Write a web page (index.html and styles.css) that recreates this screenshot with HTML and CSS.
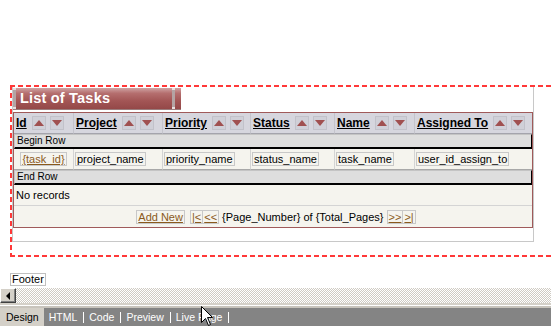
FILE: index.html
```html
<!DOCTYPE html>
<html lang="en">
<head>
    <meta charset="UTF-8">
    <meta name="viewport" content="width=device-width, initial-scale=1.0">
    <title>List of Tasks - Design</title>
    <link rel="stylesheet" href="styles.css">
</head>
<body>

<div class="design-view">
    <div class="drop-zone">
        <div class="panel">
            <div class="panel-title">
                <span class="title-cap"></span>
                <span class="title-text">List of Tasks</span>
                <span class="title-cap"></span>
                <span class="title-end"></span>
            </div>

            <table class="grid">
                <colgroup>
                    <col class="col-id">
                    <col class="col-project">
                    <col class="col-priority">
                    <col class="col-status">
                    <col class="col-name">
                    <col class="col-assigned">
                </colgroup>
                <thead>
                    <tr>
                        <th><div class="head"><a>Id</a><span class="sort up"></span><span class="sort down"></span></div></th>
                        <th><div class="head"><a>Project</a><span class="sort up"></span><span class="sort down"></span></div></th>
                        <th><div class="head"><a>Priority</a><span class="sort up"></span><span class="sort down"></span></div></th>
                        <th><div class="head"><a>Status</a><span class="sort up"></span><span class="sort down"></span></div></th>
                        <th><div class="head"><a>Name</a><span class="sort up"></span><span class="sort down"></span></div></th>
                        <th class="last"><div class="head"><a>Assigned To</a><span class="sort up"></span><span class="sort down"></span></div></th>
                    </tr>
                </thead>
                <tbody>
                    <tr>
                        <td colspan="6" class="marker-cell"><div class="marker">Begin Row</div></td>
                    </tr>
                    <tr class="data-row">
                        <td><div class="cell center"><span class="field link">{task_id}</span></div></td>
                        <td><div class="cell"><span class="field">project_name</span></div></td>
                        <td><div class="cell"><span class="field">priority_name</span></div></td>
                        <td><div class="cell"><span class="field">status_name</span></div></td>
                        <td><div class="cell"><span class="field">task_name</span></div></td>
                        <td class="last"><div class="cell"><span class="field">user_id_assign_to</span></div></td>
                    </tr>
                    <tr>
                        <td colspan="6" class="marker-cell"><div class="marker">End Row</div></td>
                    </tr>
                    <tr>
                        <td colspan="6" class="empty-cell"><div class="empty">No records</div></td>
                    </tr>
                    <tr>
                        <td colspan="6" class="nav-cell">
                            <div class="nav">
                                <span class="field link add-new">Add New</span>
                                <span class="field link">|&lt;</span><span class="field link joined">&lt;&lt;</span>
                                <span class="pages">{Page_Number} of {Total_Pages}</span>
                                <span class="field link">&gt;&gt;</span><span class="field link joined">&gt;|</span>
                            </div>
                        </td>
                    </tr>
                </tbody>
            </table>
        </div>
    </div>

    <div class="footer-zone"><span class="footer-box">Footer</span></div>

    <div class="hscroll"><span class="scroll-btn"></span></div>
    <div class="scroll-edge"></div>

    <div class="view-tabs">
        <span class="view-tab active">Design</span>
        <span class="view-tab">HTML</span>
        <span class="view-tab">Code</span>
        <span class="view-tab">Preview</span>
        <span class="view-tab">Live Page</span>
    </div>

    <svg class="cursor" width="13" height="21" viewBox="0 0 13 21">
        <path d="M0.5 0.5 L0.5 16.5 L4.5 12.5 L7.5 19.5 L9.5 18.5 L6.5 11.5 L11.5 11.5 Z" fill="#fff" stroke="#000" stroke-width="1"/>
    </svg>
</div>

</body>
</html>
```

FILE: styles.css
```css
body {
    margin: 0;
    background-color: #fff;
    overflow: hidden;
    font-family: "Liberation Sans", Arial, sans-serif;
    font-size: 11px;
    color: #000;
}

.design-view {
    position: relative;
    height: 326px;
    padding-top: 85px;
    box-sizing: border-box;
}

/* red dashed outline of the form area */
.drop-zone {
    margin: 0 -20px 0 10px;
    padding: 2px 0 15px 2px;
    background:
        repeating-linear-gradient(90deg, #ff3838 0 5px, transparent 5px 8px) top left / 100% 2px no-repeat,
        repeating-linear-gradient(90deg, #ff3838 0 5px, transparent 5px 8px) bottom left / 100% 2px no-repeat,
        repeating-linear-gradient(180deg, #ff3838 0 5px, transparent 5px 8px) top left / 2px 100% no-repeat;
}

.panel {
    width: 522px;
    box-sizing: border-box;
    border: 1px solid #c8c8c8;
    border-top: 0;
    padding: 1px 0 13px;
}

.panel-title {
    display: flex;
    width: 168px;
    height: 21px;
    border-bottom: 1px solid #9a7c7c;
    margin-bottom: 2px;
    background: linear-gradient(#cfa3a3 0, #b56f6f 25%, #a35656 60%, #944848 100%);
}

.title-cap {
    width: 3px;
    background: linear-gradient(#e8e0e0 0 2px, #b4a4a4 2px calc(100% - 2px), #e8e0e0 calc(100% - 2px));
}

.title-text {
    flex: 1;
    padding-left: 4px;
    color: #fff;
    font-weight: bold;
    font-size: 14.5px;
    line-height: 21px;
    letter-spacing: 0.2px;
}

.title-end {
    width: 6px;
}

.grid {
    width: 520px;
    table-layout: fixed;
    border-collapse: separate;
    border-spacing: 0;
    border: 1px solid #a05a5a;
}

.col-id { width: 60px; }
.col-project { width: 89px; }
.col-priority { width: 88px; }
.col-status { width: 84px; }
.col-name { width: 80px; }
.col-assigned { width: 117px; }

.grid th {
    padding: 0;
    background-color: #d6d6de;
    border-right: 1px solid #c4c4cc;
    border-bottom: 1px solid #a4a4ac;
    text-align: left;
}

.grid th.last,
.grid td.last {
    border-right: 0;
}

.head {
    display: flex;
    align-items: center;
    height: 20px;
    padding-left: 2px;
}

.head a {
    font-weight: bold;
    font-size: 12px;
    text-decoration: underline;
    color: #000;
    white-space: nowrap;
}

.sort {
    display: flex;
    align-items: center;
    justify-content: center;
    width: 14px;
    height: 14px;
    box-sizing: border-box;
    border: 1px solid #c2c2ca;
    background-color: #d0d0d8;
    margin-left: 4px;
}

.sort.up {
    margin-left: 5px;
}

.sort::before {
    content: "";
    border-left: 5px solid transparent;
    border-right: 5px solid transparent;
}

.sort.up::before {
    border-bottom: 6px solid #a05050;
}

.sort.down::before {
    border-top: 6px solid #a05050;
}

.grid td {
    padding: 0;
}

.marker {
    height: 15px;
    box-sizing: border-box;
    border: 1px solid;
    border-color: #c4c4c4 #000 #000 #c4c4c4;
    border-bottom-width: 2px;
    background-color: #dedede;
    padding-left: 2px;
    font-size: 10px;
    line-height: 12px;
}

.data-row td {
    background-color: #f5f4ee;
    border-right: 1px solid #d4d4d4;
    border-bottom: 1px solid #a8a8a8;
}

.cell {
    display: flex;
    align-items: center;
    height: 20px;
    padding-left: 1px;
}

.cell.center {
    justify-content: center;
    padding-left: 0;
}

.field {
    border: 1px solid #c8c8c8;
    padding: 0 1px;
    line-height: 12px;
    white-space: nowrap;
}

.field.joined {
    border-left: 0;
}

.link {
    color: #8a5a1c;
    text-decoration: underline;
}

.empty-cell {
    background-color: #f5f4ee;
    border-bottom: 1px solid #d4d4d4;
}

.empty {
    height: 20px;
    line-height: 20px;
    padding-left: 2px;
}

.nav-cell {
    background-color: #f5f4ee;
}

.nav {
    display: flex;
    align-items: center;
    justify-content: center;
    height: 21px;
    padding-left: 6px;
}

.add-new {
    margin-right: 5px;
}

.pages {
    margin: 0 3px;
    white-space: nowrap;
}

.footer-zone {
    display: flex;
    padding: 16px 0 2px 10px;
}

.footer-box {
    border: 1px solid #c0c0c0;
    padding: 0 1px;
    line-height: 11px;
}

.hscroll {
    display: flex;
    height: 15px;
    background-color: #fff;
    background-image: conic-gradient(#cfcbc3 25%, transparent 0 50%, #cfcbc3 0 75%, transparent 0);
    background-size: 2px 2px;
}

.scroll-btn {
    display: flex;
    align-items: center;
    justify-content: center;
    width: 16px;
    height: 15px;
    box-sizing: border-box;
    background-color: #d4d0c8;
    border: 1px solid;
    border-color: #fff #404040 #404040 #fff;
    box-shadow: inset -1px -1px #808080;
}

.scroll-btn::before {
    content: "";
    border-top: 4px solid transparent;
    border-bottom: 4px solid transparent;
    border-right: 4px solid #000;
}

.scroll-edge {
    height: 5px;
    background: linear-gradient(#d4d0c8 0 2px, #fff 2px 3px, #c8c4bc 3px);
}

.view-tabs {
    display: flex;
    align-items: center;
    height: 18px;
    background-color: #848484;
    font-size: 10.5px;
}

.view-tab {
    color: #fff;
    padding: 0 6px 0 5px;
    border-right: 1px solid #fff;
    line-height: 11px;
}

.view-tab.active {
    align-self: stretch;
    display: flex;
    align-items: center;
    padding: 0 5px 0 6px;
    border-right: 0;
    background-color: #d4d0c8;
    color: #000;
}

.cursor {
    position: absolute;
    left: 201px;
    top: 306px;
}
```
